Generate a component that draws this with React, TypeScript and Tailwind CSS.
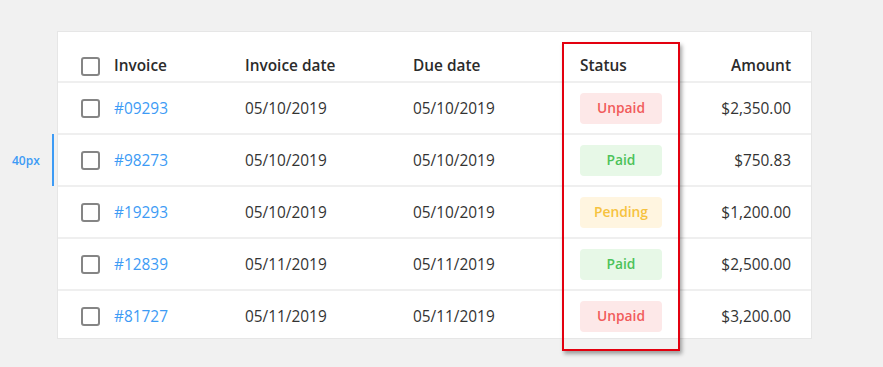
import React from 'react';

type Status = 'Unpaid' | 'Paid' | 'Pending';

const rows: { id: string; date: string; due: string; status: Status; amount: string }[] = [
  { id: '#09293', date: '05/10/2019', due: '05/10/2019', status: 'Unpaid', amount: '$2,350.00' },
  { id: '#98273', date: '05/10/2019', due: '05/10/2019', status: 'Paid', amount: '$750.83' },
  { id: '#19293', date: '05/10/2019', due: '05/10/2019', status: 'Pending', amount: '$1,200.00' },
  { id: '#12839', date: '05/11/2019', due: '05/11/2019', status: 'Paid', amount: '$2,500.00' },
  { id: '#81727', date: '05/11/2019', due: '05/11/2019', status: 'Unpaid', amount: '$3,200.00' },
];

const badge: Record<Status, string> = {
  Unpaid: 'bg-[#fde8e8] text-[#f15b5b]',
  Paid: 'bg-[#e7f8e7] text-[#4cc259]',
  Pending: 'bg-[#fff5e0] text-[#f6c23e]',
};

function Checkbox() {
  return <div className="w-[19px] h-[19px] rounded-[3px] border-2 border-[#858585] bg-white" />;
}

export default function App() {
  return (
    <div className="relative w-[883px] h-[367px] bg-[#f1f1f1] pt-[31px] pl-[57px] overflow-hidden font-['Open_Sans',sans-serif] text-[15.4px] text-[#333]">
      {/* spacing annotation */}
      <div className="absolute left-[12px] top-[152px] text-[12px] font-semibold text-[#3d9bf5]">40px</div>
      <div className="absolute left-[52px] top-[134px] w-[2px] h-[52px] bg-[#3d9bf5]" />

      {/* table card */}
      <div className="w-[755px] h-[308px] bg-white border border-[#e6e6e6] overflow-hidden">
        <div className="flex items-center h-[49px] pt-[19px] pl-[23px] pr-[20px] font-semibold text-[#2b2b2b]">
          <div className="w-[33px]"><Checkbox /></div>
          <div className="w-[131px]">Invoice</div>
          <div className="w-[168px]">Invoice date</div>
          <div className="w-[167px]">Due date</div>
          <div className="flex-1">Status</div>
          <div>Amount</div>
        </div>
        {rows.map((r) => (
          <div key={r.id} className="flex items-center h-[52px] border-t-2 border-[#efefef] pt-[1px] pl-[23px] pr-[20px]">
            <div className="w-[33px]"><Checkbox /></div>
            <div className="w-[131px] text-[#3d9bf5]">{r.id}</div>
            <div className="w-[168px]">{r.date}</div>
            <div className="w-[167px]">{r.due}</div>
            <div className="flex-1">
              <div className={`w-[82px] h-[31px] rounded-[4px] flex items-center justify-center text-[13.8px] font-semibold ${badge[r.status]}`}>
                {r.status}
              </div>
            </div>
            <div>{r.amount}</div>
          </div>
        ))}
      </div>

      {/* highlight box over status column */}
      <div className="absolute left-[562px] top-[42px] w-[118px] h-[309px] border-2 border-[#e3000f] shadow-[2px_3px_4px_rgba(0,0,0,0.35)] pointer-events-none" />
    </div>
  );
}
